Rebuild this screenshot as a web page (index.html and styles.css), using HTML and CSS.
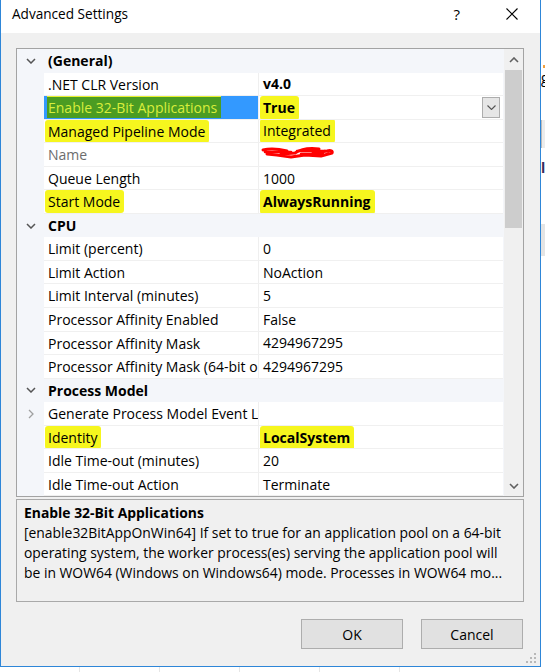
FILE: index.html
```html
<!DOCTYPE html>
<html>
<head>
<meta charset="utf-8">
<link rel="stylesheet" href="styles.css">
</head>
<body>
<div class="desktop">
  <div class="window">
    <div class="titlebar">
      <span class="title">Advanced Settings</span>
      <span class="help">?</span>
      <svg class="close" width="12" height="12" viewBox="0 0 12 12"><path d="M0.5 0.5 L11.5 11.5 M11.5 0.5 L0.5 11.5" stroke="#000" stroke-width="1.1" fill="none"/></svg>
    </div>
    <div class="body">
      <div class="grid">
        <div class="rows">
          <div class="row cat"><div class="gut"><svg width="10" height="6" viewBox="0 0 10 6"><path d="M1 1 L5 5 L9 1" stroke="#555" stroke-width="1.5" fill="none"/></svg></div><div class="catname">(General)</div></div>
          <div class="row"><div class="gut"></div><div class="name">.NET CLR Version</div><div class="val b">v4.0</div></div>
          <div class="row sel"><div class="gut"></div><div class="name"><span class="mk-sel">Enable 32-Bit Applications</span></div><div class="val b"><span class="hl">True</span><span class="dd"><svg width="9" height="5" viewBox="0 0 9 5"><path d="M0.5 0.5 L4.5 4.5 L8.5 0.5" stroke="#555" stroke-width="1.1" fill="none"/></svg></span></div></div>
          <div class="row"><div class="gut"></div><div class="name"><span class="hl">Managed Pipeline Mode</span></div><div class="val"><span class="hl">Integrated</span></div></div>
          <div class="row"><div class="gut"></div><div class="name ro">Name</div><div class="val"><svg class="scribble" width="74" height="14" viewBox="0 0 74 14"><path d="M2 5 C10 3 18 4 26 6 L20 9 L34 8 C40 4 50 3 58 4 L52 8 L66 6 C70 5 72 6 71 8 L60 11 L44 10 L30 12 L16 10 L6 9" stroke="#f00" stroke-width="3" fill="none" stroke-linejoin="round" stroke-linecap="round"/><path d="M4 7 L30 7 M36 6 L64 6 M40 9 L62 9" stroke="#f00" stroke-width="2.5" fill="none" stroke-linecap="round"/></svg></div></div>
          <div class="row"><div class="gut"></div><div class="name">Queue Length</div><div class="val">1000</div></div>
          <div class="row"><div class="gut"></div><div class="name"><span class="hl">Start Mode</span></div><div class="val b"><span class="hl">AlwaysRunning</span></div></div>
          <div class="row cat"><div class="gut"><svg width="10" height="6" viewBox="0 0 10 6"><path d="M1 1 L5 5 L9 1" stroke="#555" stroke-width="1.5" fill="none"/></svg></div><div class="catname">CPU</div></div>
          <div class="row"><div class="gut"></div><div class="name">Limit (percent)</div><div class="val">0</div></div>
          <div class="row"><div class="gut"></div><div class="name">Limit Action</div><div class="val">NoAction</div></div>
          <div class="row"><div class="gut"></div><div class="name">Limit Interval (minutes)</div><div class="val">5</div></div>
          <div class="row"><div class="gut"></div><div class="name">Processor Affinity Enabled</div><div class="val">False</div></div>
          <div class="row"><div class="gut"></div><div class="name">Processor Affinity Mask</div><div class="val">4294967295</div></div>
          <div class="row"><div class="gut"></div><div class="name">Processor Affinity Mask (64-bit option)</div><div class="val">4294967295</div></div>
          <div class="row cat"><div class="gut"><svg width="10" height="6" viewBox="0 0 10 6"><path d="M1 1 L5 5 L9 1" stroke="#555" stroke-width="1.5" fill="none"/></svg></div><div class="catname">Process Model</div></div>
          <div class="row"><div class="gut"><svg width="6" height="10" viewBox="0 0 6 10"><path d="M1 1 L5 5 L1 9" stroke="#a0a0a0" stroke-width="1.3" fill="none"/></svg></div><div class="name">Generate Process Model Event Log Entry</div><div class="val"></div></div>
          <div class="row"><div class="gut"></div><div class="name"><span class="hl">Identity</span></div><div class="val b"><span class="hl">LocalSystem</span></div></div>
          <div class="row"><div class="gut"></div><div class="name">Idle Time-out (minutes)</div><div class="val">20</div></div>
          <div class="row"><div class="gut"></div><div class="name">Idle Time-out Action</div><div class="val">Terminate</div></div>
        </div>
        <div class="scrollbar">
          <div class="arrow"><svg width="10" height="6" viewBox="0 0 10 6"><path d="M1 5 L5 1 L9 5" stroke="#606060" stroke-width="1.6" fill="none"/></svg></div>
          <div class="track"><div class="thumb"></div></div>
          <div class="arrow"><svg width="10" height="6" viewBox="0 0 10 6"><path d="M1 1 L5 5 L9 1" stroke="#606060" stroke-width="1.6" fill="none"/></svg></div>
        </div>
      </div>
      <div class="desc">
        <div class="desc-title">Enable 32-Bit Applications</div>
        <div class="desc-text">[enable32BitAppOnWin64] If set to true for an application pool on a 64-bit operating system, the worker process(es) serving the application pool will be in WOW64 (Windows on Windows64) mode. Processes in WOW64 mo...</div>
      </div>
      <div class="buttons">
        <button class="btn">OK</button>
        <button class="btn">Cancel</button>
      </div>
    </div>
    <div class="grip">
      <i class="d1"></i><i class="d2"></i><i class="d3"></i><i class="d4"></i><i class="d5"></i><i class="d6"></i>
    </div>
  </div>
  <div class="behind">
    <div class="bh-a"></div>
    <div class="bh-g">g</div>
    <div class="bh-b"></div>
    <div class="bh-li">li</div>
    <div class="bh-c"></div>
  </div>
</div>
<div class="under">
  <div class="uc"></div><div class="uc"></div><div class="uc"></div><div class="uc"></div><div class="uc"></div><div class="uc last"></div>
</div>
</body>
</html>
```
FILE: styles.css
```css
* { box-sizing: border-box; }
html, body { margin: 0; padding: 0; }
body {
  width: 545px;
  height: 672px;
  overflow: hidden;
  background: #fff;
  font-family: "Open Sans", "Noto Sans", sans-serif;
  font-size: 14px;
  color: #000;
}
.desktop { display: flex; height: 667px; }
.window {
  position: relative;
  flex: none;
  width: 541px;
  height: 667px;
  border: 1px solid #2e86d8;
  border-top: none;
  background: #f0f0f0;
  display: flex;
  flex-direction: column;
}
.titlebar {
  height: 33px;
  background: #fff;
  display: flex;
  align-items: center;
  padding-left: 11px;
  padding-right: 22px;
  flex: none;
}
.title { font-size: 13.6px; flex: 1; padding-bottom: 6px; }
.help { font-size: 15px; margin-right: 46px; padding-bottom: 6px; }
.close { margin-bottom: 5px; }
.body { padding: 15px 16px 0 15px; flex: 1; display: flex; flex-direction: column; }
.grid {
  height: 449px;
  border: 1px solid #a3a3a3;
  background: #f4f6fa;
  display: flex;
  overflow: hidden;
}
.rows { flex: 1; overflow: hidden; }
.row {
  display: flex;
  height: 23.56px;
  line-height: 22px;
  white-space: nowrap;
}
.gut {
  width: 27px;
  flex: none;
  display: flex;
  align-items: center;
  justify-content: center;
  padding-left: 1px;
}
.name {
  width: 215px;
  flex: none;
  overflow: hidden;
  background: #fff;
  padding: 1px 0 0 4px;
  border-right: 1px solid #efefef;
  border-bottom: 1px solid #f0f0f0;
}
.val {
  flex: 1;
  background: #fff;
  padding: 1px 0 0 4px;
  border-bottom: 1px solid #f0f0f0;
  display: flex;
  align-items: center;
  overflow: hidden;
  margin-right: 1px;
}
.b { font-weight: 700; }
.ro { color: #6d6d6d; }
.catname { flex: 1; font-weight: 700; padding: 1px 0 0 4px; }
.row.sel .name { background: #3399ff; }
.mk-sel {
  display: inline-block;
  background: #4b9c22;
  color: #d9ee3c;
  margin-left: -1px;
  padding: 0 4px 0 1px;
  line-height: 21px;
  box-shadow: 0 -2px 0 #e8f030;
}
.hl {
  background: #f6f61e;
  padding: 2px 4px 2px 3px;
  margin-left: -3px;
  border-radius: 3px;
}
.val .hl { line-height: 20px; }
.dd {
  margin-left: auto;
  margin-right: 3px;
  width: 18px;
  height: 21px;
  border: 1px solid #adadad;
  background: #e6e6e6;
  display: flex;
  align-items: center;
  justify-content: center;
}
.scribble { margin-left: -2px; margin-top: -6px; }
.scrollbar {
  width: 19px;
  flex: none;
  background: #f0f0f0;
  display: flex;
  flex-direction: column;
}
.arrow { height: 21px; display: flex; align-items: center; justify-content: center; }
.track { flex: 1; padding: 0 1px; }
.thumb { height: 158px; background: #cdcdcd; }
.desc {
  margin-top: 2px;
  height: 103px;
  border: 1px solid #a9a9a9;
  padding: 2px 7px;
  font-size: 13.9px;
}
.desc-title { font-weight: 700; line-height: 21px; }
.desc-text { line-height: 20px; }
.buttons {
  display: flex;
  justify-content: flex-end;
  gap: 18px;
  margin-top: 17px;
  padding-right: 1px;
}
.btn {
  width: 102px;
  height: 30px;
  border: 1px solid #adadad;
  background: #e1e1e1;
  font-family: inherit;
  font-size: 14px;
  color: #000;
  padding: 0;
}
.grip { position: absolute; right: 4px; bottom: 3px; width: 10px; height: 10px; }
.grip i { position: absolute; width: 2px; height: 2px; background: #b8b8b8; }
.grip .d1 { right: 0; top: 0; }
.grip .d2 { right: 0; top: 4px; }
.grip .d3 { right: 4px; top: 4px; }
.grip .d4 { right: 0; top: 8px; }
.grip .d5 { right: 4px; top: 8px; }
.grip .d6 { right: 8px; top: 8px; }
.behind { flex: 1; background: #fff; position: relative; overflow: hidden; display: flex; flex-direction: column; }
.bh-a { height: 3px; width: 3px; background: #f0a040; margin: 65px 0 0 2px; }
.bh-g { font-size: 14px; line-height: 16px; margin-top: 2px; }
.bh-b { height: 28px; background: #ececec; margin-top: 34px; border-left: 1px solid #bbb; }
.bh-li { font-size: 14px; font-weight: 700; color: #3a2a5a; line-height: 16px; margin-top: 12px; }
.bh-c { height: 32px; background: #e4e4e4; margin-top: 48px; }
.under { display: flex; height: 5px; background: #fff; }
.uc { width: 80px; border-right: 1px solid #e6e6e6; }
.uc.last { flex: 1; border-right: none; }
```
